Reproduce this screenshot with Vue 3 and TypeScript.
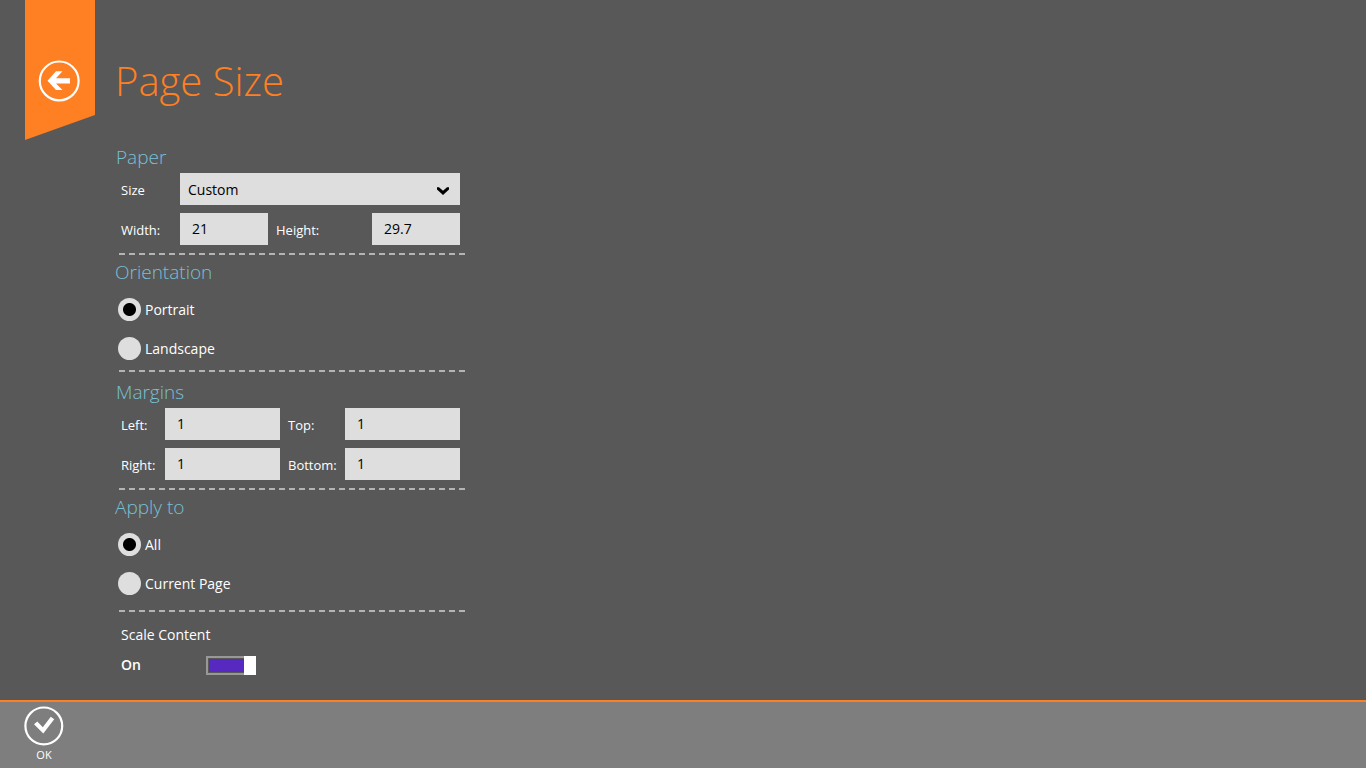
<script setup lang="ts">
import { ref } from 'vue'

const paperSizes: string[] = ['Custom', 'A4', 'A5', 'Letter']
const paper = ref('Custom')
const width = ref('21')
const height = ref('29.7')
const orientation = ref('Portrait')
const applyTo = ref('All')
const scaleContent = ref(true)
const margins = ref([
  { id: 'left', label: 'Left:', value: '1' },
  { id: 'top', label: 'Top:', value: '1' },
  { id: 'right', label: 'Right:', value: '1' },
  { id: 'bottom', label: 'Bottom:', value: '1' },
])
</script>

<template>
  <div class="page">
    <header class="header">
      <div class="ribbon">
        <button class="icon-button" type="button" aria-label="Back">
          <svg width="42" height="42" viewBox="0 0 42 42">
            <circle cx="21.2" cy="20.9" r="19.4" fill="none" stroke="#fff" stroke-width="2.2" />
            <path d="M9.500 20.800 L18 11.300 H24.500 L18 18.200 H32 V23.400 H18 L24.500 30 H18 Z" fill="#fff" />
          </svg>
        </button>
      </div>
      <h1 class="title">Page Size</h1>
    </header>

    <main class="form">
      <section class="section">
        <h2 class="heading indented">Paper</h2>
        <div class="fields paper">
          <label for="size">Size</label>
          <div class="select-wrap">
            <select id="size" v-model="paper">
              <option v-for="s in paperSizes" :key="s">{{ s }}</option>
            </select>
            <svg class="chevron" width="14" height="10" viewBox="0 0 14 10">
              <path d="M1 1.200 L3 1.200 L7 4.800 L11 1.200 L13 1.200 V3.500 L7 9 L1 3.500 Z" fill="#000" />
            </svg>
          </div>
          <label for="width">Width:</label>
          <input id="width" v-model="width" class="text" type="text" />
          <label for="height" class="second">Height:</label>
          <input id="height" v-model="height" class="text" type="text" />
        </div>
      </section>

      <section class="section">
        <h2 class="heading">Orientation</h2>
        <div class="radios">
          <label v-for="o in ['Portrait', 'Landscape']" :key="o" class="radio">
            <input v-model="orientation" type="radio" name="orientation" :value="o" />{{ o }}
          </label>
        </div>
      </section>

      <section class="section spaced">
        <h2 class="heading indented">Margins</h2>
        <div class="fields margins">
          <template v-for="(m, i) in margins" :key="m.id">
            <label :for="m.id" :class="{ second: i % 2 === 1 }">{{ m.label }}</label>
            <input :id="m.id" v-model="m.value" class="text" type="text" />
          </template>
        </div>
      </section>

      <section class="section">
        <h2 class="heading">Apply to</h2>
        <div class="radios last">
          <label v-for="a in ['All', 'Current Page']" :key="a" class="radio">
            <input v-model="applyTo" type="radio" name="apply" :value="a" />{{ a }}
          </label>
        </div>
      </section>

      <div class="scale">
        <label for="scale">Scale Content</label>
        <div class="scale-row">
          <span class="state">{{ scaleContent ? 'On' : 'Off' }}</span>
          <input id="scale" v-model="scaleContent" class="switch" type="checkbox" role="switch" />
        </div>
      </div>
    </main>

    <footer class="bar">
      <button class="icon-button ok" type="button">
        <svg width="40" height="40" viewBox="0 0 40 40">
          <circle cx="19.800" cy="19.900" r="18.400" fill="none" stroke="#fff" stroke-width="2.2" />
          <path d="M10 18.200 L13.300 15.500 L18.800 21.300 L26.800 10.800 L30.200 13.300 L19.300 27.500 Z" fill="#fff" />
        </svg>
        <span>OK</span>
      </button>
    </footer>
  </div>
</template>

<style>
body {
  background: #585858;
}
</style>

<style scoped>
.page {
  display: flex;
  flex-direction: column;
  min-height: 100vh;
  background: #585858;
  color: #fff;
  font-family: "Segoe UI", "Open Sans", "Noto Sans", sans-serif;
  font-size: 14px;
}

.header {
  display: flex;
  gap: 20px;
  padding-left: 25px;
}

.ribbon {
  box-sizing: border-box;
  width: 70px;
  height: 140px;
  padding: 60px 15px 0 13px;
  background: #ff7f23;
  clip-path: polygon(0 0, 100% 0, 100% 115px, 0 100%);
}

.icon-button {
  display: flex;
  padding: 0;
  border: 0;
  background: none;
  color: inherit;
  font: inherit;
}

.title {
  margin: 0;
  padding-top: 53px;
  color: #ff7f23;
  font-size: 40px;
  font-weight: 300;
  line-height: 56px;
}

.form {
  flex: 1;
  width: 350px;
  margin-left: 115px;
}

.section {
  padding-bottom: 2px;
  background: repeating-linear-gradient(90deg, #b4b4b4 0 6px, transparent 6px 10px) 4px 100% / 346px 2px no-repeat;
}

.spaced {
  padding-top: 3px;
}

.heading {
  margin: 0;
  padding-top: 2px;
  color: #78c0d4;
  font-size: 19px;
  font-weight: 300;
  line-height: 31px;
}

.indented {
  padding-left: 1px;
}

.fields {
  display: grid;
  grid-auto-rows: 32px;
  row-gap: 8px;
  align-items: stretch;
  padding: 0 5px 8px 6px;
  font-size: 13px;
  line-height: 34px;
}

.paper {
  grid-template-columns: 59px 1fr 104px 1fr;
}

.margins {
  grid-template-columns: 44px 1fr 65px 1fr;
}

.second {
  padding-left: 8px;
}

.select-wrap {
  display: grid;
  grid-column: span 3;
  align-items: center;
}

.select-wrap > * {
  grid-area: 1 / 1;
}

.chevron {
  justify-self: end;
  margin: 4px 10px 0 0;
  pointer-events: none;
}

select,
.text {
  box-sizing: border-box;
  width: 100%;
  min-width: 0;
  height: 32px;
  margin: 0;
  border: 0;
  border-radius: 0;
  background: #dedede;
  color: #000;
  font: inherit;
  font-size: 14px;
  line-height: 20px;
}

select {
  appearance: none;
  padding: 2px 8px 0;
}

.text {
  padding: 0 12px 2px;
}

.radios {
  padding: 2px 0 2px 3px;
}

.last {
  padding-bottom: 7px;
}

.radio {
  display: flex;
  align-items: center;
  gap: 4px;
  height: 39px;
}

.radio input {
  appearance: none;
  width: 23px;
  height: 23px;
  margin: 0;
  border-radius: 50%;
  background: #dedede;
}

.radio input:checked {
  background: radial-gradient(circle, #000 6px, #dedede 7px);
}

.scale {
  padding: 12px 6px 16px;
  line-height: 22px;
}

.scale-row {
  display: flex;
  align-items: center;
  padding-top: 8px;
}

.state {
  width: 85px;
  font-weight: 600;
}

.switch {
  position: relative;
  box-sizing: border-box;
  appearance: none;
  width: 50px;
  height: 19px;
  margin: 0;
  padding: 1px;
  border: 2px solid #989898;
}

.switch:checked {
  background: #5729c1 content-box;
}

.switch::after {
  content: "";
  position: absolute;
  top: -2px;
  bottom: -2px;
  left: -2px;
  width: 12px;
  background: #fff;
}

.switch:checked::after {
  left: auto;
  right: -2px;
}

.bar {
  box-sizing: border-box;
  min-height: 68px;
  padding: 4px 24px;
  border-top: 2px solid #ff7f23;
  background: #7e7e7e;
}

.ok {
  flex-direction: column;
  align-items: center;
  font-size: 11px;
  line-height: 18px;
}
</style>
